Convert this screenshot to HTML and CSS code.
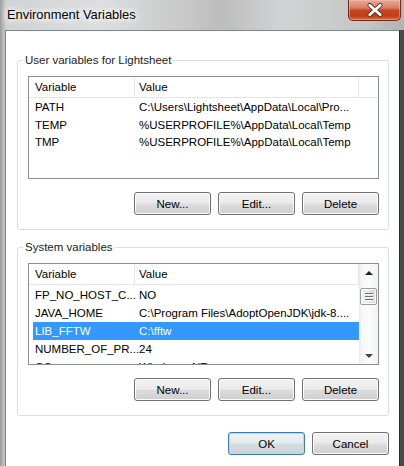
FILE: index.html
```html
<!DOCTYPE html>
<html lang="en">
<head>
<meta charset="utf-8">
<title>Environment Variables</title>
<link rel="stylesheet" href="styles.css">
</head>
<body>
<div class="window">
  <div class="titlebar">
    <span class="title">Environment Variables</span>
    <button class="close" aria-label="Close">
      <svg width="53" height="20" viewBox="0 0 53 20">
        <path d="M21.5 5 L32.5 15 M32.5 5 L21.5 15" stroke="#5a2a1e" stroke-width="4.6" stroke-linecap="round" fill="none"/>
        <path d="M21.5 5 L32.5 15 M32.5 5 L21.5 15" stroke="#ffffff" stroke-width="2.8" stroke-linecap="round" fill="none"/>
      </svg>
    </button>
  </div>
  <div class="client">
    <fieldset class="group">
      <legend>User variables for Lightsheet</legend>
      <div class="list">
        <div class="list-main">
          <div class="head"><div class="c1">Variable</div><div class="c2">Value</div></div>
          <div class="rows">
            <div class="row"><div class="c1">PATH</div><div class="c2">C:\Users\Lightsheet\AppData\Local\Pro...</div></div>
            <div class="row"><div class="c1">TEMP</div><div class="c2">%USERPROFILE%\AppData\Local\Temp</div></div>
            <div class="row"><div class="c1">TMP</div><div class="c2">%USERPROFILE%\AppData\Local\Temp</div></div>
          </div>
        </div>
      </div>
      <div class="buttons">
        <button class="btn">New...</button>
        <button class="btn">Edit...</button>
        <button class="btn">Delete</button>
      </div>
    </fieldset>

    <fieldset class="group group-sys">
      <legend>System variables</legend>
      <div class="list">
        <div class="list-main">
          <div class="head"><div class="c1">Variable</div><div class="c2">Value</div></div>
          <div class="rows">
            <div class="row"><div class="c1">FP_NO_HOST_C...</div><div class="c2">NO</div></div>
            <div class="row"><div class="c1">JAVA_HOME</div><div class="c2">C:\Program Files\AdoptOpenJDK\jdk-8....</div></div>
            <div class="row selected"><div class="c1">LIB_FFTW</div><div class="c2">C:\fftw</div></div>
            <div class="row"><div class="c1">NUMBER_OF_PR...</div><div class="c2">24</div></div>
            <div class="row"><div class="c1">OS</div><div class="c2">Windows_NT</div></div>
          </div>
        </div>
        <div class="scrollbar">
          <div class="sb-arrow"><span class="tri tri-up"></span></div>
          <div class="sb-track">
            <div class="sb-thumb"><span></span><span></span><span></span></div>
          </div>
          <div class="sb-arrow"><span class="tri tri-down"></span></div>
        </div>
      </div>
      <div class="buttons">
        <button class="btn">New...</button>
        <button class="btn">Edit...</button>
        <button class="btn">Delete</button>
      </div>
    </fieldset>

    <div class="dialog-buttons">
      <button class="btn btn-default">OK</button>
      <button class="btn">Cancel</button>
    </div>
  </div>
</div>
</body>
</html>
```

FILE: styles.css
```css
* { box-sizing: border-box; }

html, body {
  margin: 0;
  height: 100%;
  overflow: hidden;
}

body {
  font-family: "Liberation Sans", Arial, sans-serif;
  font-size: 11.5px;
  color: #000;
  background:
    linear-gradient(to right, #9c9c9c 0, #b8b8b8 3px, #c9c9c9 5px, transparent 6px),
    linear-gradient(to right, #cfd2d4 0%, #dcdedf 25%, #c9c9c9 45%, #bdbdbd 55%, #d2d3d4 70%, #c6c6c6 90%, #b3b3b3 100%);
}

.window {
  display: flex;
  flex-direction: column;
  height: 100%;
}

.titlebar {
  height: 30px;
  display: flex;
  align-items: flex-start;
  justify-content: space-between;
  flex-shrink: 0;
}

.title {
  margin: 7px 0 0 7px;
  font-size: 12.9px;
  line-height: 16px;
  color: #000;
  text-shadow: 0 0 6px #fff, 0 0 8px #fff, 0 0 10px rgba(255,255,255,0.9);
}

.close {
  margin: 0 3px 0 0;
  padding: 0;
  width: 53px;
  height: 21px;
  border: 1px solid #6a2a1c;
  border-top: none;
  border-radius: 0 0 5px 5px;
  background: linear-gradient(#e9ab9c 0%, #d97a62 40%, #c6461f 52%, #c33f17 80%, #d86a44 100%);
  box-shadow: inset 0 0 0 1px rgba(255, 200, 180, 0.45);
  display: flex;
  align-items: center;
  justify-content: center;
}

.close svg { display: block; }

.client {
  flex: 1;
  margin: 0 4px 0 5px;
  background: #fff;
  border: 1px solid #7b8590;
  border-right-color: #2e2e2e;
  border-bottom: none;
  box-shadow: 4px 0 0 #4a4a4a;
  padding-top: 21px;
  display: flex;
  flex-direction: column;
}

.group {
  margin: 0 10px 0 11px;
  padding: 8px 9px 14px 10px;
  border: 1px solid #d5dfe5;
  border-radius: 3px;
  min-width: 0;
}

.group-sys { margin-top: 9px; }

.group legend {
  margin-left: -5px;
  padding: 0 2px;
  line-height: 16px;
  font-size: 11.5px;
  color: #1b1b1b;
}

.list {
  height: 103px;
  border: 1px solid #8a8d91;
  background: #fff;
  display: flex;
  overflow: hidden;
}

.group-sys .list { height: 102px; }

.list-main {
  flex: 1;
  min-width: 0;
  overflow: hidden;
}

.head {
  display: flex;
  height: 21px;
  border-bottom: 1px solid #e5e5e5;
  line-height: 20px;
}

.head .c1 {
  width: 106px;
  padding-left: 6px;
  border-right: 1px solid #e5e5e5;
}

.head .c2 {
  width: 224px;
  padding-left: 4px;
  border-right: 1px solid #e5e5e5;
}

.rows { padding-top: 1px; }

.row {
  display: flex;
  margin-left: 4px;
  width: 326px;
  height: 17.5px;
  line-height: 17.5px;
  white-space: nowrap;
}

.group-sys .row {
  height: 18px;
  line-height: 18px;
}

.row .c1 {
  width: 102px;
  padding-left: 2px;
  overflow: visible;
}

.row .c2 {
  flex: 1;
  padding-left: 4px;
  overflow: hidden;
}

.row.selected {
  background: #3399ff;
  color: #fff;
}

.scrollbar {
  width: 19px;
  display: flex;
  flex-direction: column;
  background: linear-gradient(to right, #e9e9e9 0, #f5f5f5 2px, #fbfbfb 50%, #f3f3f3 100%);
}

.sb-arrow {
  height: 17px;
  display: flex;
  align-items: center;
  justify-content: center;
}

.tri {
  width: 0;
  height: 0;
  border-left: 4px solid transparent;
  border-right: 4px solid transparent;
}

.tri-up { border-bottom: 4px solid #222; }
.tri-down { border-top: 4px solid #444; }

.sb-track {
  flex: 1;
  padding: 7px 1px 0 1px;
}

.sb-thumb {
  height: 17px;
  border: 1px solid #999ea3;
  border-radius: 2px;
  background: linear-gradient(to right, #f3f3f3, #e8e8e8 50%, #d9d9d9);
  box-shadow: inset 0 0 0 1px #fff;
  display: flex;
  flex-direction: column;
  align-items: center;
  justify-content: center;
  gap: 2px;
}

.sb-thumb span {
  display: block;
  width: 8px;
  height: 1px;
  background: #6e6e6e;
  box-shadow: 0 1px 0 #fff;
}

.buttons {
  margin-top: 13px;
  display: flex;
  justify-content: flex-end;
  gap: 7px;
}

.btn {
  width: 77px;
  height: 23px;
  padding: 0;
  font-family: "Liberation Sans", Arial, sans-serif;
  font-size: 11.5px;
  color: #000;
  border: 1px solid #707070;
  border-radius: 3px;
  background: linear-gradient(#f2f2f2 0%, #ebebeb 48%, #dddddd 52%, #cfcfcf 100%);
  box-shadow: inset 0 0 0 1px #fcfcfc;
}

.btn-default {
  border-color: #3c7fb1;
  background: linear-gradient(#eef3f6 0%, #e4ebef 48%, #d6dde2 52%, #cad2d8 100%);
  box-shadow: inset 0 0 0 1px #a8dcf7;
}

.dialog-buttons {
  margin: 16px 10px 0 0;
  display: flex;
  justify-content: flex-end;
  gap: 7px;
}
```
